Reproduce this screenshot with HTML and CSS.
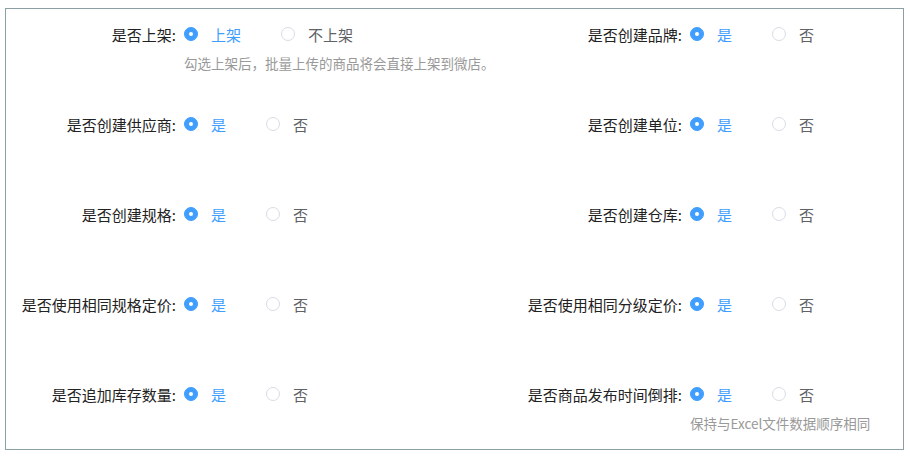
FILE: index.html
```html
<!DOCTYPE html>
<html lang="zh-CN">
<head>
<meta charset="utf-8">
<link rel="stylesheet" href="styles.css">
</head>
<body>
<div class="panel">
  <div class="grid">
    <div class="item">
      <div class="row">
        <span class="label">是否上架:</span>
        <span class="opt on"><i class="dot"></i>上架</span>
        <span class="opt"><i class="dot"></i>不上架</span>
      </div>
      <div class="tip">勾选上架后，批量上传的商品将会直接上架到微店。</div>
    </div>
    <div class="item">
      <div class="row">
        <span class="label">是否创建品牌:</span>
        <span class="opt on"><i class="dot"></i>是</span>
        <span class="opt"><i class="dot"></i>否</span>
      </div>
    </div>
    <div class="item">
      <div class="row">
        <span class="label">是否创建供应商:</span>
        <span class="opt on"><i class="dot"></i>是</span>
        <span class="opt"><i class="dot"></i>否</span>
      </div>
    </div>
    <div class="item">
      <div class="row">
        <span class="label">是否创建单位:</span>
        <span class="opt on"><i class="dot"></i>是</span>
        <span class="opt"><i class="dot"></i>否</span>
      </div>
    </div>
    <div class="item">
      <div class="row">
        <span class="label">是否创建规格:</span>
        <span class="opt on"><i class="dot"></i>是</span>
        <span class="opt"><i class="dot"></i>否</span>
      </div>
    </div>
    <div class="item">
      <div class="row">
        <span class="label">是否创建仓库:</span>
        <span class="opt on"><i class="dot"></i>是</span>
        <span class="opt"><i class="dot"></i>否</span>
      </div>
    </div>
    <div class="item">
      <div class="row">
        <span class="label">是否使用相同规格定价:</span>
        <span class="opt on"><i class="dot"></i>是</span>
        <span class="opt"><i class="dot"></i>否</span>
      </div>
    </div>
    <div class="item">
      <div class="row">
        <span class="label">是否使用相同分级定价:</span>
        <span class="opt on"><i class="dot"></i>是</span>
        <span class="opt"><i class="dot"></i>否</span>
      </div>
    </div>
    <div class="item">
      <div class="row">
        <span class="label">是否追加库存数量:</span>
        <span class="opt on"><i class="dot"></i>是</span>
        <span class="opt"><i class="dot"></i>否</span>
      </div>
    </div>
    <div class="item">
      <div class="row">
        <span class="label">是否商品发布时间倒排:</span>
        <span class="opt on"><i class="dot"></i>是</span>
        <span class="opt"><i class="dot"></i>否</span>
      </div>
      <div class="tip">保持与Excel文件数据顺序相同</div>
    </div>
  </div>
</div>
</body>
</html>
```

FILE: styles.css
```css
html, body {
  margin: 0;
  padding: 0;
  background: #ffffff;
}
body {
  font-family: "Noto Sans CJK SC", "Noto Sans", sans-serif;
  color: #222222;
}
.panel {
  margin: 8px 0 0 5px;
  width: 897px;
  height: 431px;
  border: 1px solid #8aa0a4;
  padding-top: 9px;
}
.grid {
  display: grid;
  grid-template-columns: 506px 1fr;
  grid-template-rows: repeat(5, 90px);
}
.item {
  display: flex;
  flex-direction: column;
}
.row {
  display: flex;
  align-items: center;
  height: 32px;
}
.label {
  width: 170px;
  margin-right: 8px;
  text-align: right;
  font-size: 15px;
  color: #222222;
  white-space: nowrap;
}
.opt {
  display: flex;
  align-items: center;
  font-size: 15px;
  color: #606266;
  margin-right: 40px;
}
.dot {
  width: 14px;
  height: 14px;
  box-sizing: border-box;
  border: 1px solid #d8dce5;
  border-radius: 50%;
  margin-right: 13px;
  background: #ffffff;
  position: relative;
}
.opt.on {
  color: #409eff;
}
.opt.on .dot {
  border-color: #409eff;
  background: #409eff;
}
.opt.on .dot::after {
  content: "";
  position: absolute;
  left: 50%;
  top: 50%;
  width: 4px;
  height: 4px;
  margin: -2px 0 0 -2px;
  border-radius: 50%;
  background: #ffffff;
}
.tip {
  margin-left: 178px;
  margin-top: 5px;
  font-size: 13.5px;
  line-height: 16px;
  color: #999999;
}
```
